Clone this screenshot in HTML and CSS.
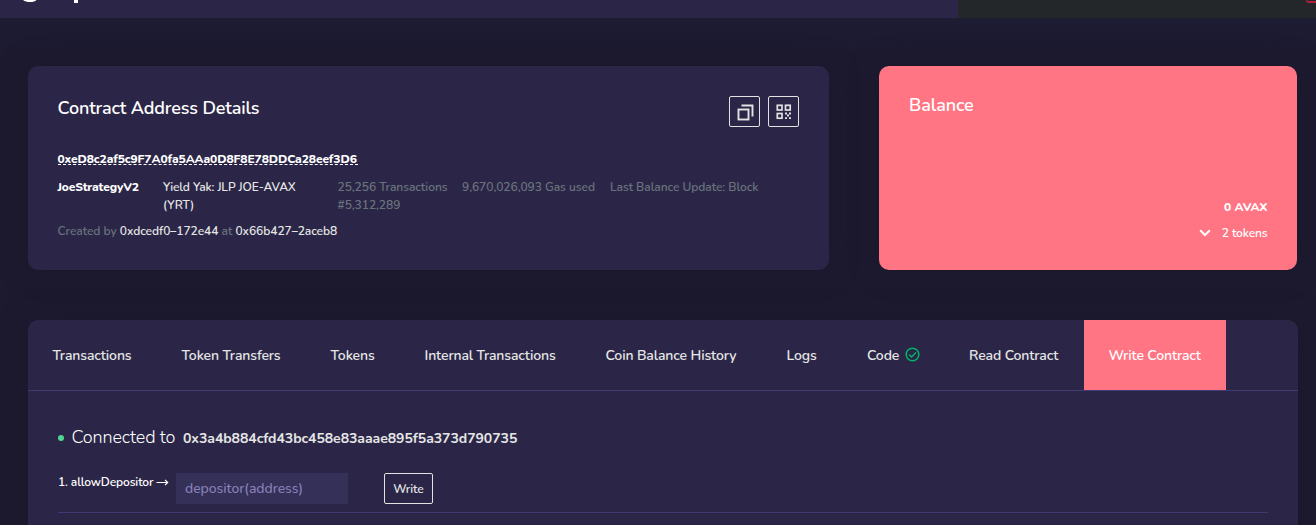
FILE: index.html
```html
<!DOCTYPE html>
<html lang="en">
<head>
<meta charset="utf-8">
<title>Contract Address Details</title>
<link rel="stylesheet" href="styles.css">
</head>
<body>
<header class="topbar">
  <div class="brand"><svg width="90" height="18" viewBox="0 0 90 18" fill="#fff"><path d="M4 0C6 1.500 8 2.100 11 2.100S16 1.500 17.500 0z"/><path d="M55 0h4v3h-4z"/></svg></div>
  <div class="network"><span class="network-badge"></span></div>
</header>
<main>
  <section class="overview">
    <article class="card details">
      <div class="details-head">
        <h1 class="title">Contract Address Details</h1>
        <div class="actions">
          <button class="icon-button" aria-label="Copy address"><svg class="copy" width="17" height="17" viewBox="0 0 17 17" fill="none" stroke="#e2e2e2" stroke-width="1.9"><rect x="1.500" y="5.500" width="10" height="10"/><path d="M4.500 1.500h11v11"/></svg></button>
          <button class="icon-button" aria-label="Show QR code"><svg width="16" height="16" viewBox="0 0 16 16" fill="none" stroke="#e2e2e2" stroke-width="1.700"><rect x="1.300" y="1.300" width="4.700" height="4.700"/><rect x="9.500" y="1.300" width="4.700" height="4.700"/><rect x="1.300" y="9.500" width="4.700" height="4.700"/><path d="M9 9.500h2M13 9.500h2M11 11.500h2M9 14.200h2M13 14.200h2" stroke-width="1.800"/></svg></button>
        </div>
      </div>
      <div class="address"><span class="address-hash">0xeD8c2af5c9F7A0fa5AAa0D8F8E78DDCa28eef3D6</span></div>
      <div class="facts">
        <strong class="contract-name">JoeStrategyV2</strong>
        <span class="token-name">Yield Yak: JLP JOE-AVAX<br>(YRT)</span>
        <div class="stats"><span class="tx-count">25,256 Transactions</span><span class="gas">9,670,026,093 Gas used</span><span class="update">Last Balance Update: Block</span><span class="block">#5,312,289</span></div>
      </div>
      <div class="creator">Created by <b class="creator-link">0xdcedf0–172e44</b> at <b class="creator-link">0x66b427–2aceb8</b></div>
    </article>
    <article class="card balance">
      <h2 class="title">Balance</h2>
      <div class="amounts">
        <strong class="avax">0 AVAX</strong>
        <div class="tokens"><svg width="12" height="8" viewBox="0 0 12 8" fill="none" stroke="#fff" stroke-width="2"><path d="M1.200 1.200 6 6l4.800-4.800"/></svg><span class="token-count">2 tokens</span></div>
      </div>
    </article>
  </section>
  <section class="card panel">
    <nav class="tabs">
      <a class="tab">Transactions</a><a class="tab">Token Transfers</a><a class="tab">Tokens</a><a class="tab">Internal Transactions</a><a class="tab">Coin Balance History</a><a class="tab">Logs</a><a class="tab late">Code<svg class="check" width="15" height="15" viewBox="0 0 15 15" fill="none" stroke="#00b46b" stroke-width="1.500"><circle cx="7.500" cy="7.500" r="6.300"/><path d="M4.200 7.600 6.600 10l4.400-4.600"/></svg></a><a class="tab late">Read Contract</a><a class="tab active">Write Contract</a>
    </nav>
    <div class="panel-body">
      <div class="connection"><i class="dot"></i><span class="connected">Connected to</span><strong class="wallet">0x3a4b884cfd43bc458e83aaae895f5a373d790735</strong></div>
      <form class="method">
        <label class="method-name"><span class="method-text">1. allowDepositor</span><svg width="13" height="7" viewBox="0 0 13 7" fill="none" stroke="#fff" stroke-width="1.200"><path d="M.5 3.500h11M9 .8l2.700 2.700L9 6.200"/></svg></label>
        <div class="field"><span class="placeholder">depositor(address)</span></div>
        <button class="write" type="button">Write</button>
      </form>
    </div>
  </section>
</main>
</body>
</html>
```
FILE: styles.css
```css
* { box-sizing: border-box; }
body { margin: 0; height: 525px; overflow: hidden; background: #1d1a31; color: #fff; font: 600 12px/18px Nunito, Lato, sans-serif; letter-spacing: -.07px; }
h1, h2 { margin: 0; }
button { padding: 0; background: transparent; border: 1px solid #e2e2e2; border-radius: 2px; color: #e6e6e6; font: inherit; letter-spacing: inherit; }
svg { display: block; flex: none; }

.topbar { display: flex; height: 18px; overflow: hidden; }
.brand { width: 958px; background: #2b2647; padding-left: 19px; }
.network { flex: 1; background: #24272a; display: flex; justify-content: flex-end; align-items: flex-start; }
.network-badge { width: 10px; height: 3px; border: 1px solid #b3213a; border-width: 0 0 2px 1px; border-radius: 0 0 0 4px; }

main { height: 507px; overflow: hidden; padding: 48px 18px 0 28px; background: linear-gradient(#1c1c33, #1d1a30 35px); }
.card { background: #2b2647; border-radius: 10px; box-shadow: 0 0 30px rgba(25, 20, 32, .4); }
.overview { display: grid; grid-template-columns: 801px 418px; column-gap: 50px; height: 204px; }
.details { padding: 30px 30px 30px 29.5px; }
.details-head { display: flex; justify-content: space-between; }
.title { font-size: 18px; line-height: 24px; font-weight: 600; white-space: nowrap; letter-spacing: -.15px; }
.actions { display: flex; gap: 8px; }
.icon-button { width: 31px; height: 31px; display: grid; place-items: center; }
.copy { margin: 1px 0 0 1px; }
.address { height: 18px; margin-top: 23px; }
.address-hash { display: block; height: 15px; line-height: 18px; font-weight: 800; letter-spacing: -.09px; border-bottom: 1px dashed #fff; width: 300px; white-space: nowrap; }
.facts { display: grid; grid-template-columns: 105.5px 174.5px 1fr; margin-top: 10px; height: 36px; color: #e6e6e6; white-space: nowrap; }
.contract-name { font-weight: 800; color: #fff; letter-spacing: -.15px; }
.token-name { letter-spacing: -.1px; }
.stats { display: grid; grid-template-columns: 124.5px 148px 1fr; color: #6a737d; letter-spacing: -.05px; }
.creator { margin-top: 8px; color: #6a737d; white-space: nowrap; letter-spacing: -.05px; }
.creator-link { font-weight: 600; color: #e6e6e6; }

.balance { padding: 27px 29.5px 28px 30px; background: #ff7584; display: flex; flex-direction: column; justify-content: space-between; }
.balance .title { letter-spacing: -.1px; }
.amounts { display: flex; flex-direction: column; align-items: flex-end; gap: 8px; }
.avax { font-weight: 800; }
.tokens { display: flex; align-items: center; gap: 10.5px; letter-spacing: -.12px; }

.panel { margin-top: 50px; width: 1270px; height: 240px; }
.tabs { display: grid; grid-template-columns: 129px 149px 94px 181px 181px 80px 102px 140px 142px; height: 71px; border-bottom: 1px solid #413b73; }
.tab { display: flex; align-items: center; padding: 1px 0 0 24.5px; font-size: 14px; color: #e6e6e6; white-space: nowrap; letter-spacing: -.12px; }
.tab.late { padding-left: 25px; }
.tab.active { background: #ff7584; color: #fff; }
.check { margin: -2px 0 0 5.5px; }
.panel-body { padding: 34px 30px 0; }
.connection { display: flex; align-items: center; height: 26px; white-space: nowrap; }
.dot { width: 6px; height: 6px; border-radius: 50%; background: #4fd693; margin-right: 7.5px; }
.connected { width: 111.5px; font-size: 18px; line-height: 24px; padding-bottom: 2px; font-weight: 300; letter-spacing: -.12px; }
.wallet { font-size: 14px; font-weight: 700; color: #e6e6e6; padding-top: 2px; letter-spacing: -.05px; }
.method { display: flex; height: 40px; margin: 22px 0 0; border-bottom: 1px solid #403a73; }
.method-name { width: 118px; height: 18px; display: flex; align-items: center; justify-content: space-between; padding-right: 7px; white-space: nowrap; letter-spacing: -.12px; }
.field { width: 172px; height: 31px; display: flex; align-items: center; padding-left: 9px; background: #343058; color: #8980b8; font-size: 14px; font-weight: 500; letter-spacing: -.04px; }
.write { width: 49px; height: 31px; margin-left: 36px; }
```
